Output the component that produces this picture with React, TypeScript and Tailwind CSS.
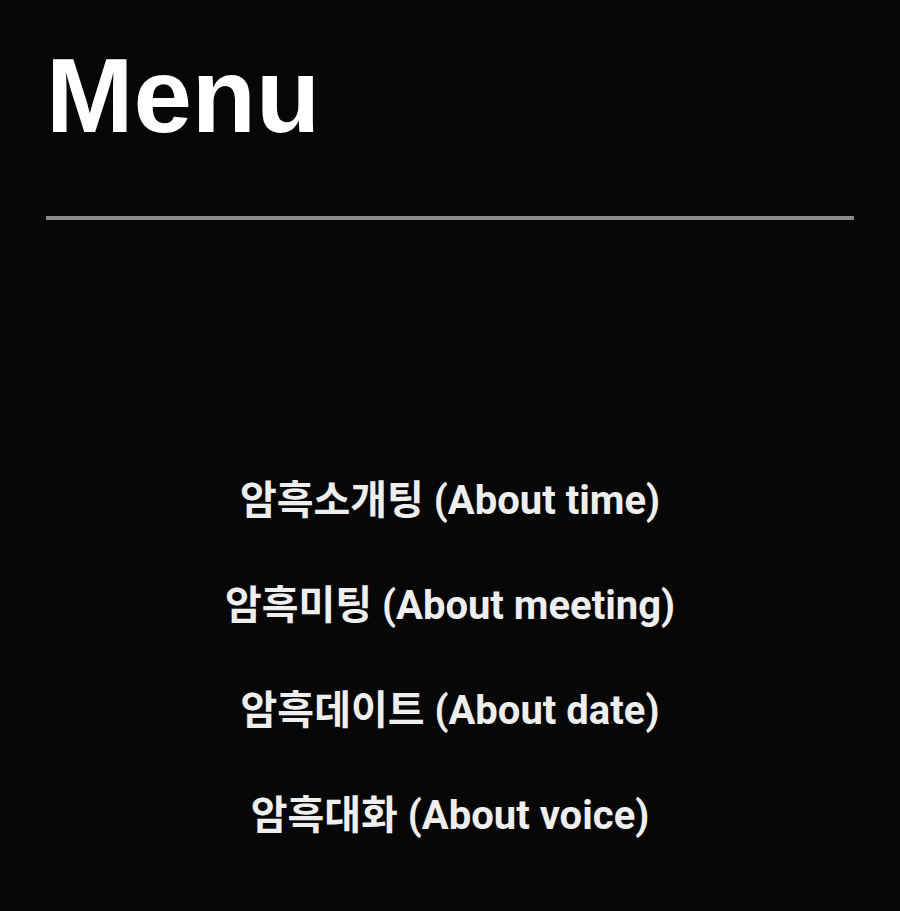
export default function App() {
  const items = [
    "암흑소개팅 (About time)",
    "암흑미팅 (About meeting)",
    "암흑데이트 (About date)",
    "암흑대화 (About voice)",
  ];
  return (
    <div className="min-h-[911px] w-full bg-[#070707] px-[46px] pt-[43px]">
      <h1
        className="text-[105px] font-bold leading-none text-white"
        style={{ fontFamily: '"Liberation Sans", Arial, sans-serif' }}
      >
        Menu
      </h1>
      <div className="mt-[68px] h-[4px] w-full bg-[#8a8a8a]" />
      <ul
        className="mt-[228px] flex flex-col"
        style={{ fontFamily: 'Roboto, "Noto Sans CJK KR", sans-serif' }}
      >
        {items.map((t) => (
          <li
            key={t}
            className="flex h-[105px] items-center justify-center text-[40px] font-bold leading-none text-[#eeeeee]"
          >
            {t}
          </li>
        ))}
      </ul>
    </div>
  );
}
